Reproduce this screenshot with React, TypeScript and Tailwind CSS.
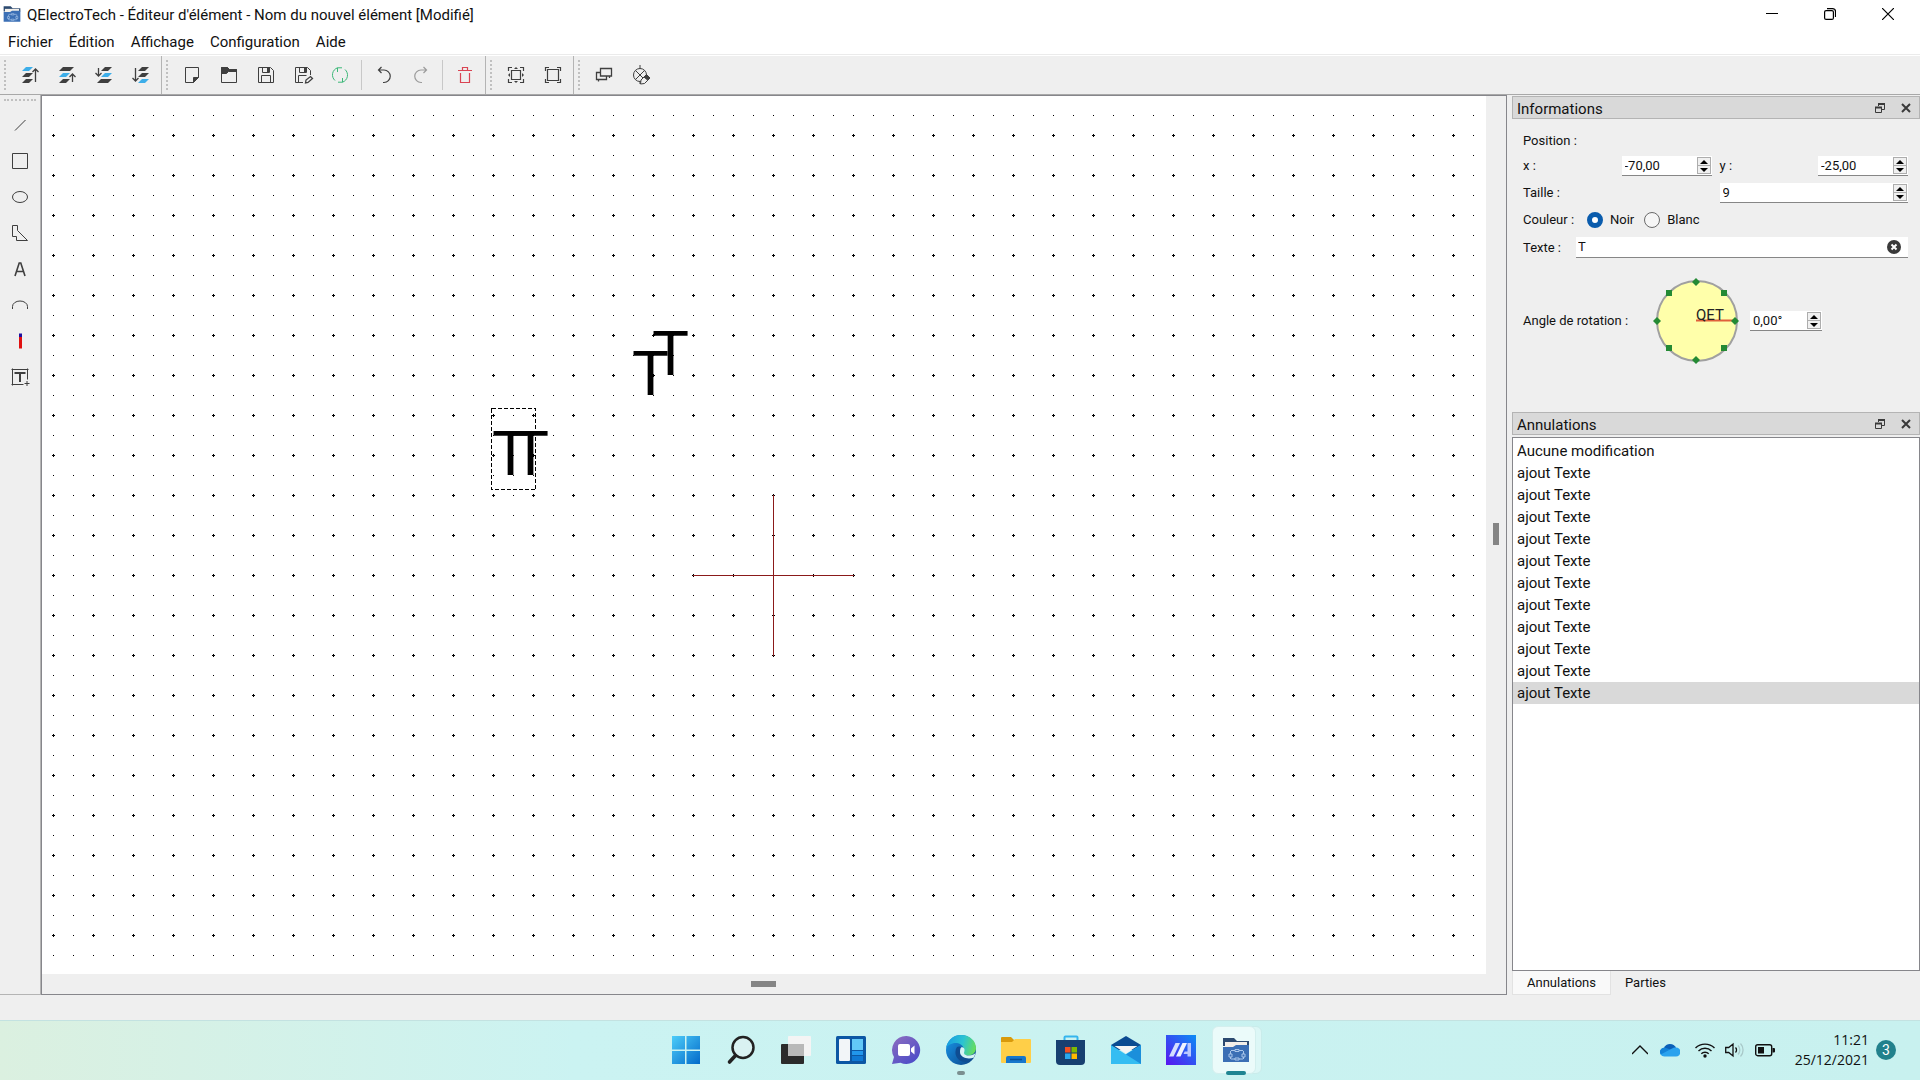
import { useState } from 'react';
import type { ReactNode } from 'react';

const UI_FONT = "font-[Roboto,'Open_Sans',sans-serif]";

const HISTORY = ['Aucune modification', ...Array.from({ length: 11 }, () => 'ajout Texte')];

const MENUS = ['Fichier', 'Édition', 'Affichage', 'Configuration', 'Aide'];

// Glyphs of the element editor, all on a 16x16 grid
function Glyph({ children, color = '#3f3f3f' }: { children: ReactNode; color?: string }) {
  return (
    <svg
      className="w-4 h-4 overflow-visible"
      viewBox="0 0 16 16"
      fill="none"
      stroke={color}
      strokeWidth="1"
      aria-hidden="true"
    >
      {children}
    </svg>
  );
}

// Three stacked sheets with an arrow; `blue` says which sheets are highlighted
function Layers({ blue, side, long }: { blue: boolean[]; side: 'left' | 'right'; long: boolean }) {
  const right = side === 'right';
  const dx = right ? 0 : 5;
  return (
    <Glyph>
      {blue.map((b, i) => (
        <path
          key={i}
          d={
            !long && (right ? i === 0 : i === 2)
              ? `M${right ? 0 : 1} ${i * 6 + 4}l4-4h11l-4 4z`
              : `M${dx} ${i * 6 + 4}l4-4h7l-4 4z`
          }
          fill={b ? '#3daee9' : '#3f3f3f'}
          stroke="none"
        />
      ))}
      {right ? (
        <path d={long ? 'M13.500 15V2M10.500 5l3-3 3 3' : 'M13.500 15V7M10.500 10l3-3 3 3'} strokeWidth="1.300" />
      ) : (
        <path d={long ? 'M2.500 1v13M-.5 11l3 3 3-3' : 'M2.500 1v8M-.5 6l3 3 3-3'} strokeWidth="1.300" />
      )}
    </Glyph>
  );
}

const DEPTH_TOOLS = [
  { name: 'Amener au premier plan', icon: <Layers blue={[true, false, false]} side="right" long /> },
  { name: 'Rapprocher', icon: <Layers blue={[false, true, false]} side="right" long={false} /> },
  { name: 'Éloigner', icon: <Layers blue={[false, true, false]} side="left" long={false} /> },
  { name: 'Envoyer au fond', icon: <Layers blue={[false, false, true]} side="left" long /> },
];

const FILE_TOOLS = [
  {
    name: 'Nouveau',
    icon: (
      <Glyph>
        <path d="M1.500.5h13v10l-5 5h-8z" />
        <path d="M14.500 10.500h-5v5z" fill="#3f3f3f" />
      </Glyph>
    ),
  },
  {
    name: 'Ouvrir',
    icon: (
      <Glyph>
        <path d="M.5.500h6l2 2h7v13H.5z" />
        <path d="M.5.500h6l2 2h7v2h-8l-2 2h-5z" fill="#3f3f3f" />
      </Glyph>
    ),
  },
  {
    name: 'Enregistrer',
    icon: (
      <Glyph>
        <path d="M.5.500h12l3 3v12H.5zM4.500.500v5h7v-5M3.500 15.500v-7h9v7" />
        <path d="M9 1h2v4H9z" fill="#3f3f3f" stroke="none" />
      </Glyph>
    ),
  },
  {
    name: 'Enregistrer sous',
    icon: (
      <Glyph>
        <path d="M8 15.500H.5V.500h12l3 3V8M4.500.500v5h7v-5M3.500 15.500v-7h8" />
        <path d="M9 1h2v4H9z" fill="#3f3f3f" stroke="none" />
        <path d="M10.500 16l.5-3 4.500-3.500 2 2L13 15.500z" strokeWidth="1.300" />
      </Glyph>
    ),
  },
  {
    name: 'Recharger',
    icon: (
      <Glyph color="#3cb878">
        <path d="M5.500.8A7.500 7.500 0 0 0 3 13.500M10.500 15.200A7.500 7.500 0 0 0 13 2.500" />
        <path d="M5.500 5V.800h4.500M10.500 11v4.200H6" />
      </Glyph>
    ),
  },
];

const UNDO_TOOLS = [
  {
    name: 'Annuler',
    icon: (
      <Glyph>
        <path d="M5.500 0L2.500 3l3 3M2.500 3H8a6 6 0 0 1 0 12.500H7" strokeWidth="1.200" />
      </Glyph>
    ),
  },
  {
    name: 'Refaire',
    icon: (
      <Glyph color="#9b9b9b">
        <path d="M10.500 0l3 3-3 3M13.500 3H8a6 6 0 0 0 0 12.500h1" strokeWidth="1.200" />
      </Glyph>
    ),
  },
];

const DELETE_TOOLS = [
  {
    name: 'Supprimer',
    icon: (
      <Glyph color="#da4453">
        <path d="M1 3.500h14M5.500 3V.500h5V3M3.500 6v9.500h9V6" strokeWidth="1.200" />
      </Glyph>
    ),
  },
];

const ZOOM_TOOLS = [
  {
    name: 'Zoom adapté',
    icon: (
      <Glyph>
        <path d="M3.500 3.500h9v9h-9zM.5 4V.500H4M12 .500h3.500V4M15.500 12v3.500H12M4 15.500H.5V12" strokeWidth="1.200" />
        <path d="M8 0l2 2H6zM8 16l2-2H6zM0 8l2-2v4zM16 8l-2-2v4z" fill="#3f3f3f" stroke="none" />
      </Glyph>
    ),
  },
  {
    name: 'Pas de zoom',
    icon: (
      <Glyph>
        <path d="M2.500 2.500h11v11h-11zM.5 4V.500H4M12 .500h3.500V4M15.500 12v3.500H12M4 15.500H.5V12" strokeWidth="1.200" />
      </Glyph>
    ),
  },
];

const PROPERTY_TOOLS = [
  {
    name: 'Éditer le nom',
    icon: (
      <Glyph>
        <path d="M4.500 1.500h11v7.500h-11zM4.500 5.500h-4v7h10V9M2.500 12.500v2M13.500 9v2" strokeWidth="1.300" />
      </Glyph>
    ),
  },
  {
    name: 'Éditer les propriétés',
    icon: (
      <Glyph>
        <circle cx="7" cy="8" r="6.500" />
        <path d="M2.500 3.500l9 9M11.500 3.500l-9 9M7-2v3.500M7 14.500V17" />
        <path d="M7.500 17l.5-4 5-5 3.500 3.500-5 5z" fill="#efefef" />
        <path d="M11 10l2.500-2.500L17 11l-2.500 2z" fill="#3f3f3f" />
      </Glyph>
    ),
  },
];

const DRAW_TOOLS = [
  { name: 'Ajouter une ligne', icon: <Glyph><path d="M3 13.500L13.500 3" /></Glyph> },
  { name: 'Ajouter un rectangle', icon: <Glyph><path d="M.5.500h15v15H.5z" /></Glyph> },
  { name: 'Ajouter une ellipse', icon: <Glyph><ellipse cx="8" cy="8" rx="7.500" ry="5.500" /></Glyph> },
  { name: 'Ajouter un polygone', icon: <Glyph><path d="M.5.500h5v5l10 10h-11v-4h-4z" /></Glyph> },
  {
    name: 'Ajouter du texte',
    icon: <Glyph><path d="M3 15L7.200 2h1.600L13 15M4.500 10.500h7" strokeWidth="1.600" /></Glyph>,
  },
  { name: 'Ajouter un arc', icon: <Glyph><path d="M.5 12V9.500a7.500 5.500 0 0 1 15 0V12" /></Glyph> },
  {
    name: 'Ajouter une borne',
    icon: (
      <Glyph>
        <path d="M7 4h3v11.500H7z" fill="#e01010" stroke="none" />
        <path d="M7 .5h3V4H7z" fill="#1f0fa0" stroke="none" />
      </Glyph>
    ),
  },
  {
    name: 'Ajouter un champ texte',
    icon: (
      <Glyph>
        <path d="M-.5.500h17M.5-.5v17M15.500-.5v11M-.5 15.500h12M15 12v5M12.500 14.500h5" />
        <path d="M3.500 5V4h9v1M8 4v9" strokeWidth="2" />
      </Glyph>
    ),
  },
];

function ToolButton({ name, icon }: { name: string; icon: ReactNode }) {
  return (
    <button type="button" aria-label={name} className="w-[37px] h-full flex items-center justify-center">
      {icon}
    </button>
  );
}

function ToolGroup({ children }: { children: ReactNode }) {
  return (
    <div className="flex h-full pr-0.5 border-r border-[#b4b4b4]">
      <div className="w-[11px] py-1 pl-1">
        <div className="w-[3px] h-full border-l-2 border-dotted border-[#c0c0c0]" />
      </div>
      {children}
    </div>
  );
}

function Separator() {
  return (
    <div className="w-[7px] py-1 flex justify-center">
      <div className="w-px h-full bg-[#c8c8c8]" />
    </div>
  );
}

function QetLogo({ className }: { className: string }) {
  return (
    <svg className={className} viewBox="0 0 28 26" aria-hidden="true">
      <path d="M1 1h11l3 3h12v5H1z" fill="#2c4a70" />
      <path d="M3 5h22v6H3z" fill="#f3efe9" />
      <path d="M1 25V10h10l3-2h13v17z" fill="#3b6fb5" />
      <g fill="none" stroke="#a9c6ea" strokeWidth="1">
        <path d="M9 13.500h4M17 13.500h4M9 22h4M17 22h4M8.500 14v3M8.500 20v2M21.500 14v3M21.500 20v2" />
        <path d="M13 12.500h4v2h-4zM13 21h4v2h-4zM7 17h3v3H7zM20 17h3v3h-3z" />
      </g>
    </svg>
  );
}

function Canvas() {
  return (
    <section className="flex-1 min-w-0 flex flex-col border border-[#86868b]">
      <div className="flex-1 min-h-0 flex">
        <div className="flex-1 min-w-0 relative bg-white">
          <svg className="absolute inset-0 w-full h-full" role="img" aria-label="Zone de dessin">
            <defs>
              <pattern id="grid" x="1" y="29" width="40" height="40" patternUnits="userSpaceOnUse">
                <path d="M9 10h3v1H9zM10 9h1v3h-1zM30 10h1v1h-1zM10 30h1v1h-1zM30 30h1v1h-1z" fill="#000" />
              </pattern>
            </defs>
            <rect y="4" width="100%" height="100%" fill="url(#grid)" />
            <g stroke="#8b1a1a" strokeWidth="1" shapeRendering="crispEdges">
              <path d="M651 479.500h161M731.500 399v161" />
            </g>
            <g className="font-[Roboto,sans-serif] text-[62px]" fill="#000">
              <text x="610" y="279">T</text>
              <text x="590" y="299">T</text>
              <text x="450" y="379">T</text>
              <text x="470" y="379">T</text>
            </g>
            <rect
              x="449.500"
              y="312.500"
              width="44"
              height="81"
              fill="none"
              stroke="#000"
              strokeDasharray="4 2"
              shapeRendering="crispEdges"
            />
          </svg>
        </div>
        <div className="w-5 flex items-center justify-center bg-[#efefef] pb-0.5">
          <div className="w-1.5 h-[22px] bg-[#858585]" />
        </div>
      </div>
      <div className="h-5 flex items-center justify-center pr-[22px] bg-[#efefef]">
        <div className="w-[25px] h-1.5 bg-[#858585]" />
      </div>
    </section>
  );
}

function DockHeader({ title }: { title: string }) {
  return (
    <div className="h-[23px] flex items-center pl-1 pr-2 border border-[#b4b4b4] bg-[#d9d9d9]">
      <h2 className="flex-1 pt-0.5 text-[15px] leading-5">{title}</h2>
      <button type="button" aria-label={`Détacher ${title}`} className="mr-4">
        <svg className="w-2.5 h-2.5" viewBox="0 0 10 10" fill="none" stroke="#3a3a3a" aria-hidden="true">
          <path d="M3.500 3V1.500h6v5H7" />
          <path d="M3 1h7M0 4.500h7" strokeWidth="2" />
          <path d="M.5 4.500h6v5h-6z" />
        </svg>
      </button>
      <button type="button" aria-label={`Fermer ${title}`}>
        <svg className="w-2.5 h-2.5" viewBox="0 0 10 10" stroke="#3a3a3a" strokeWidth="2" aria-hidden="true">
          <path d="M1 1l8 8M9 1L1 9" />
        </svg>
      </button>
    </div>
  );
}

function SpinBox({ id, value, className }: { id: string; value: string; className: string }) {
  const [text, setText] = useState(value);
  return (
    <div className={`flex h-5 p-px bg-white border-b border-[#868686] ${className}`}>
      <input
        id={id}
        value={text}
        onChange={(e) => setText(e.target.value)}
        className="flex-1 min-w-0 px-0.5 bg-transparent outline-none"
      />
      <div className="w-3.5 flex flex-col border border-[#adadad] bg-[#f0f0f0]">
        <button type="button" aria-label="Augmenter" className="flex-1 flex items-center justify-center">
          <svg className="w-2 h-1" viewBox="0 0 8 4" aria-hidden="true"><path d="M4 0l4 4H0z" /></svg>
        </button>
        <button
          type="button"
          aria-label="Diminuer"
          className="flex-1 flex items-center justify-center border-t border-[#adadad]"
        >
          <svg className="w-2 h-1" viewBox="0 0 8 4" aria-hidden="true"><path d="M4 4l4-4H0z" /></svg>
        </button>
      </div>
    </div>
  );
}

function Radio({ label, checked, onPick }: { label: string; checked: boolean; onPick: () => void }) {
  return (
    <label className="flex items-center gap-[7px]">
      <input
        type="radio"
        name="couleur"
        checked={checked}
        onChange={onPick}
        className="appearance-none w-4 h-4 rounded-full border border-[#6a6a6a] bg-[#f6f6f6] checked:border-[5px] checked:border-[#0a5cad] checked:bg-white"
      />
      {label}
    </label>
  );
}

// Points every 45 degrees: diamonds on the axes, squares between them
function AngleDial() {
  return (
    <svg className="w-[84px] h-[84px] overflow-visible" viewBox="0 0 84 84" role="img" aria-label="Angle">
      <circle cx="42" cy="42" r="40" fill="#ffffaa" stroke="#a0a0a0" strokeWidth="2" />
      <path d="M41 41.500h38" stroke="#e0603a" strokeWidth="2" />
      <g fill="#248a34">
        <path d="M41-1l4 4-4 4-4-4zM41 77l4 4-4 4-4-4zM2 38l4 4-4 4-4-4zM80 38l4 4-4 4-4-4z" />
        <path d="M11 11h6v6h-6zM66 11h6v6h-6zM11 66h6v6h-6zM66 66h6v6h-6z" />
      </g>
      <text x="41" y="41" className="font-[Roboto,sans-serif] text-[15px]" fill="#222">
        QET
      </text>
    </svg>
  );
}

function InfoPanel() {
  const [color, setColor] = useState('noir');
  const [text, setText] = useState('T');
  return (
    <section>
      <DockHeader title="Informations" />
      <form className="text-[13px] leading-4 pl-[11px] pr-3 pt-3.5 pb-12">
        <p>Position :</p>
        <div className="grid grid-cols-2 gap-2 mt-[7px]">
          <div className="flex items-center justify-between">
            <label htmlFor="pos-x">x :</label>
            <SpinBox id="pos-x" value="-70,00" className="w-[90px]" />
          </div>
          <div className="flex items-center justify-between">
            <label htmlFor="pos-y">y :</label>
            <SpinBox id="pos-y" value="-25,00" className="w-[90px]" />
          </div>
        </div>
        <div className="grid grid-cols-2 gap-2 items-center mt-[7px]">
          <label htmlFor="taille">Taille :</label>
          <SpinBox id="taille" value="9" className="w-full" />
        </div>
        <div className="flex items-center mt-[9px]">
          <span className="w-16">Couleur :</span>
          <Radio label="Noir" checked={color === 'noir'} onPick={() => setColor('noir')} />
          <span className="w-2.5" />
          <Radio label="Blanc" checked={color === 'blanc'} onPick={() => setColor('blanc')} />
        </div>
        <div className="flex items-center mt-[9px]">
          <label htmlFor="texte" className="w-[53px]">Texte :</label>
          <div className="flex-1 h-[21px] flex items-center pl-0.5 pr-[7px] bg-white border-b border-[#868686]">
            <input
              id="texte"
              value={text}
              onChange={(e) => setText(e.target.value)}
              className="flex-1 min-w-0 outline-none"
            />
            <button type="button" aria-label="Effacer" onClick={() => setText('')}>
              <svg className="w-3.5 h-3.5" viewBox="0 0 14 14" aria-hidden="true">
                <circle cx="7" cy="7" r="7" fill="#3a3a3a" />
                <path d="M4.500 4.500l5 5M9.500 4.500l-5 5" stroke="#fff" strokeWidth="2" />
              </svg>
            </button>
          </div>
        </div>
        <div className="flex items-center mt-[21px]">
          <label htmlFor="angle" className="w-[132px]">Angle de rotation :</label>
          <AngleDial />
          <SpinBox id="angle" value="0,00°" className="w-[72px] ml-[11px]" />
        </div>
      </form>
    </section>
  );
}

function UndoPanel() {
  const [current, setCurrent] = useState(HISTORY.length - 1);
  return (
    <section className="flex-1 min-h-0 flex flex-col pt-px">
      <DockHeader title="Annulations" />
      <ul className="flex-1 min-h-0 overflow-hidden mt-0.5 pt-0.5 bg-white border border-[#86868b] text-[15px] leading-[22px]">
        {HISTORY.map((entry, i) => (
          <li key={i}>
            <button
              type="button"
              onClick={() => setCurrent(i)}
              className={`w-full pl-1 text-left ${i === current ? 'bg-[#d9d9d9]' : ''}`}
            >
              {entry}
            </button>
          </li>
        ))}
      </ul>
      <div className="flex h-6 text-[13px] leading-5">
        <button type="button" className="px-3.5 bg-[#f9f9f9] border-x border-b border-[#e2e2e2]">
          Annulations
        </button>
        <button type="button" className="px-3.5 pb-px">Parties</button>
      </div>
    </section>
  );
}

const TASKS = [
  {
    name: 'Démarrer',
    icon: (
      <svg className="w-[30px] h-[30px]" viewBox="0 0 30 30" aria-hidden="true">
        <defs>
          <linearGradient id="win" x1="0" y1="0" x2="30" y2="30" gradientUnits="userSpaceOnUse">
            <stop stopColor="#4fd0fb" />
            <stop offset="1" stopColor="#0067c8" />
          </linearGradient>
        </defs>
        <path d="M1 1h13v13.500H1zM15.500 1H29v13.500H15.500zM1 16h13v13H1zM15.500 16H29v13H15.500z" fill="url(#win)" />
      </svg>
    ),
  },
  {
    name: 'Rechercher',
    icon: (
      <svg className="w-[30px] h-[30px]" viewBox="0 0 30 30" fill="none" stroke="#222" aria-hidden="true">
        <circle cx="17" cy="12.500" r="10.500" strokeWidth="2.500" fill="#d9f2f2" />
        <path d="M9.500 20.500l-6 6.500" strokeWidth="3.600" strokeLinecap="round" />
      </svg>
    ),
  },
  {
    name: 'Affichage des tâches',
    icon: (
      <svg className="w-[30px] h-[30px]" viewBox="0 0 30 30" aria-hidden="true">
        <rect y="9" width="23" height="20" rx="1" fill="#2b2b2b" />
        <rect x="7" y="1" width="23" height="20" rx="1" fill="#f4f4f4" />
        <path d="M7 9h16v12H8a1 1 0 0 1-1-1z" fill="#b9b9b9" />
      </svg>
    ),
  },
  {
    name: 'Widgets',
    icon: (
      <svg className="w-[30px] h-[30px]" viewBox="0 0 30 30" aria-hidden="true">
        <rect y="1" width="30" height="28" rx="1.500" fill="#0c57a4" />
        <rect x="3" y="4" width="11" height="22" rx="1" fill="#f2f5f8" />
        <path d="M16 4h11v11H16z" fill="#62c9f8" />
        <path d="M16 16h11v4H16z" fill="#2196ec" />
        <path d="M16 21h11v5H16z" fill="#0f78d4" />
      </svg>
    ),
  },
  {
    name: 'Conversation',
    icon: (
      <svg className="w-[30px] h-[30px]" viewBox="0 0 30 30" aria-hidden="true">
        <defs>
          <linearGradient id="chat" x1="4" y1="2" x2="24" y2="28" gradientUnits="userSpaceOnUse">
            <stop stopColor="#8a6cc0" />
            <stop offset="1" stopColor="#4b4cc8" />
          </linearGradient>
        </defs>
        <path d="M15.500 1a14 14 0 1 1-6 26.800L1 29l2-7A14 14 0 0 1 15.500 1z" fill="url(#chat)" />
        <rect x="7" y="9" width="12" height="12" rx="2" fill="#fff" />
        <path d="M20 13.500l3.500-3v9l-3.500-3z" fill="#fff" />
      </svg>
    ),
  },
  {
    name: 'Edge',
    running: true,
    icon: (
      <svg className="w-[30px] h-[30px]" viewBox="0 0 30 30" aria-hidden="true">
        <defs>
          <linearGradient id="edgeTop" x1="2" y1="6" x2="30" y2="14" gradientUnits="userSpaceOnUse">
            <stop stopColor="#1aa0e0" />
            <stop offset=".5" stopColor="#2bc3d2" />
            <stop offset="1" stopColor="#6be055" />
          </linearGradient>
          <linearGradient id="edgeLow" x1="2" y1="10" x2="24" y2="28" gradientUnits="userSpaceOnUse">
            <stop stopColor="#1688d8" />
            <stop offset="1" stopColor="#0c4a90" />
          </linearGradient>
        </defs>
        <circle cx="15" cy="15" r="15" fill="url(#edgeLow)" />
        <path d="M0 13C2 4 8 0 15 0c9 0 15 6 15 13 0 5-4 7.500-8 7.500-3.500 0-5-1.500-4.500-3C19 14 17 9 11 8 6 7.500 2 10 0 13z" fill="url(#edgeTop)" />
        <path d="M11 12c-4 6 0 15 8 15 4 0 7-2 9-4.500-6 2-13 0-13-5.500 0-2 1-3 1-4-1-1.500-3.500-2-5-1z" fill="#0f4d92" />
        <path d="M15 12.500c2-1 4 1 3.500 3.500-.8 2-1 4.500 4.500 4.500 3 0 5-1 6.500-2.500L28 22.500c-6 2.500-14 0-14-5.500 0-2 .3-3.500 1-4.500z" fill="#d6f3f5" />
      </svg>
    ),
  },
  {
    name: 'Explorateur',
    icon: (
      <svg className="w-[30px] h-[30px]" viewBox="0 0 30 30" aria-hidden="true">
        <path d="M0 3a1 1 0 0 1 1-1h9l3 3v6H0z" fill="#d99a0b" />
        <path d="M0 7h11l3-3h15a1 1 0 0 1 1 1v22a1 1 0 0 1-1 1H1a1 1 0 0 1-1-1z" fill="#ffcf48" />
        <path d="M5 28v-5a2 2 0 0 1 2-2h16a2 2 0 0 1 2 2v5z" fill="#1777cc" />
        <path d="M9 24.500h12" stroke="#0b4f94" strokeWidth="1.500" />
      </svg>
    ),
  },
  {
    name: 'Microsoft Store',
    icon: (
      <svg className="w-[30px] h-[30px]" viewBox="0 0 30 30" aria-hidden="true">
        <path d="M8.500 7V2.500a1 1 0 0 1 1-1h11a1 1 0 0 1 1 1V7" fill="none" stroke="#35b5ee" strokeWidth="2" />
        <path d="M0 5h29v21a4 4 0 0 1-4 4H4a4 4 0 0 1-4-4z" fill="#173f70" />
        <path d="M9 12h5.500v5.500H9z" fill="#f25022" />
        <path d="M15.500 12H21v5.500h-5.500z" fill="#7fba00" />
        <path d="M9 18.500h5.500V24H9z" fill="#29a8ee" />
        <path d="M15.500 18.500H21V24h-5.500z" fill="#ffb900" />
      </svg>
    ),
  },
  {
    name: 'Courrier',
    icon: (
      <svg className="w-[30px] h-[30px]" viewBox="0 0 30 30" aria-hidden="true">
        <path d="M0 10L15 1l15 9v5H0z" fill="#0a4a91" />
        <path d="M0 29V10l30 19z" fill="#35bdf2" />
        <path d="M0 29l15-10L30 10v19z" fill="#35bdf2" />
        <path d="M15 19.500L30 10v19z" fill="#1b8fdb" />
        <path d="M3.500 11h23L15 18.500z" fill="#f4f4f4" />
      </svg>
    ),
  },
  {
    name: 'MyASUS',
    icon: (
      <svg className="w-[30px] h-[30px]" viewBox="0 0 30 30" aria-hidden="true">
        <defs>
          <linearGradient id="asus" x1="0" y1="30" x2="30" y2="0" gradientUnits="userSpaceOnUse">
            <stop stopColor="#5a14f0" />
            <stop offset="1" stopColor="#0b8df5" />
          </linearGradient>
        </defs>
        <path d="M0 0h30v30H0z" fill="url(#asus)" />
        <path d="M3 21.500L9.500 8H14L7.500 21.500z" fill="#d5deff" />
        <path d="M10 21.500L16.500 8H21l-6.500 13.500z" fill="#f0f3ff" />
        <path d="M21.500 8H25v13.500h-3.500V19h-4l1.200-2.500h2.800z" fill="#b9c8ff" />
      </svg>
    ),
  },
  {
    name: 'QElectroTech',
    active: true,
    icon: <QetLogo className="w-7 h-[26px]" />,
  },
];

function Taskbar() {
  return (
    <footer className="h-[60px] grid grid-cols-[1fr_auto_1fr] border-t border-[#c3e2e1] bg-linear-to-r from-[#dbf0e0] via-[#cbf3f2] via-30% to-[#c8f1ef]">
      <div />
      <nav className="flex pl-px">
        {TASKS.map((task) => (
          <button
            key={task.name}
            type="button"
            aria-label={task.name}
            className="relative w-[55px] h-[58px] flex items-center justify-center"
          >
            {task.active && (
              <>
                <span className="absolute left-2 top-[5px] w-[46px] h-12 rounded-md bg-[#dcf7f6] border border-[#c9eceb]" />
                <span className="absolute left-1 top-[5px] w-11 h-12 rounded-md bg-[#ebfbfa] border border-[#d3efee]" />
                <span className="absolute left-[18px] bottom-1 w-5 h-1 rounded-full bg-[#1f8592]" />
              </>
            )}
            {task.running && (
              <span className="absolute left-6 bottom-1 w-2 h-1 rounded-full bg-[#7b8f90]" />
            )}
            <span className="relative">{task.icon}</span>
          </button>
        ))}
      </nav>
      <div className="h-[58px] flex items-center justify-end pr-6">
        <button type="button" aria-label="Icônes cachées" className="mr-3">
          <svg className="w-4 h-4" viewBox="0 0 16 16" fill="none" stroke="#111" strokeWidth="1.300" aria-hidden="true">
            <path d="M0 12l8-8 8 8" />
          </svg>
        </button>
        <button type="button" aria-label="OneDrive" className="mr-[15px]">
          <svg className="w-5 h-4" viewBox="0 0 20 16" aria-hidden="true">
            <path d="M4 6a6.500 6.500 0 0 1 12 0l-2 6H4z" fill="#0a5fb8" />
            <path d="M4.500 5.500A4.500 4.500 0 0 0 1 13l11-5z" fill="#1382d8" />
            <path d="M16 5.500a4.300 4.300 0 0 1 0 9H4.500c-2 0-3-.8-3.800-2L12 6.500c1-.7 2.500-1.200 4-1z" fill="#2aa2ee" />
          </svg>
        </button>
        <button type="button" aria-label="Réseau, son et batterie" className="flex items-center gap-2.5 mr-5">
          <svg className="w-5 h-4" viewBox="0 0 20 16" fill="none" stroke="#111" strokeWidth="1.400" aria-hidden="true">
            <path d="M.5 6a13.500 13.500 0 0 1 19 0M3.500 9a9.200 9.200 0 0 1 13 0M6.300 11.800a5.200 5.200 0 0 1 7.400 0" />
            <circle cx="10" cy="14" r="1.700" fill="#111" stroke="none" />
          </svg>
          <svg className="w-5 h-4" viewBox="0 0 20 16" fill="none" stroke="#111" strokeWidth="1.300" aria-hidden="true">
            <path d="M.7 5.500h3L8 2v12l-4.300-3.500h-3zM10.500 5.500a3.500 3.500 0 0 1 0 5" />
            <path d="M13 3.500a6.500 6.500 0 0 1 0 9M15.500 1.500a9.500 9.500 0 0 1 0 13" stroke="#a9c9c9" />
          </svg>
          <svg className="w-5 h-4" viewBox="0 0 20 16" fill="none" stroke="#111" strokeWidth="1.400" aria-hidden="true">
            <rect x=".7" y="2.700" width="16" height="11" rx="2" />
            <path d="M3 5h6v6.500H3zM17.500 6h1.500a1 1 0 0 1 1 1v2.500a1 1 0 0 1-1 1h-1.500z" fill="#111" stroke="none" />
          </svg>
        </button>
        <time
          className="text-right font-['Open_Sans','Noto_Sans',sans-serif] text-[14px] leading-5 mr-[7px]"
          dateTime="2021-12-25T11:21"
        >
          11:21
          <br />
          25/12/2021
        </time>
        <button type="button" className="w-5 h-5 rounded-full bg-[#22818c] text-white text-[14px] leading-5">
          3
        </button>
      </div>
    </footer>
  );
}

export default function App() {
  return (
    <div className={`${UI_FONT} h-screen flex flex-col bg-[#efefef] text-[#111] overflow-hidden`}>
      {/* Title bar */}
      <header className="h-7 flex items-center pl-[3px] bg-white text-[15px] leading-5">
        <QetLogo className="w-[18px] h-[18px] mr-1.5" />
        <h1 className="flex-1 pt-0.5">QElectroTech - Éditeur d'élément - Nom du nouvel élément [Modifié]</h1>
        <button type="button" aria-label="Réduire" className="w-[58px] flex justify-center">
          <svg className="w-3 h-3" viewBox="0 0 12 12" stroke="#000" aria-hidden="true"><path d="M0 5.500h12" /></svg>
        </button>
        <button type="button" aria-label="Restaurer" className="w-[58px] flex justify-center">
          <svg className="w-3 h-3" viewBox="0 0 12 12" fill="none" stroke="#000" strokeWidth="1.200" aria-hidden="true">
            <rect x=".6" y="2.600" width="8.800" height="8.800" rx="1.500" />
            <path d="M3 .6h5.500a3 3 0 0 1 3 3V9" />
          </svg>
        </button>
        <button type="button" aria-label="Fermer" className="w-[58px] mr-[3px] flex justify-center">
          <svg className="w-3 h-3" viewBox="0 0 12 12" stroke="#000" strokeWidth="1.200" aria-hidden="true">
            <path d="M0 0l12 12M12 0L0 12" />
          </svg>
        </button>
      </header>

      <nav className="h-[27px] flex items-center gap-4 px-2 pt-0.5 bg-white border-b border-[#ebebeb] text-[15px] leading-5">
        {MENUS.map((menu) => (
          <button key={menu} type="button">{menu}</button>
        ))}
      </nav>

      {/* Toolbars */}
      <div className="h-10 flex border-t border-t-white border-b border-b-[#a8a8a8]">
        <ToolGroup>
          {DEPTH_TOOLS.map((t) => <ToolButton key={t.name} {...t} />)}
        </ToolGroup>
        <ToolGroup>
          {FILE_TOOLS.map((t) => <ToolButton key={t.name} {...t} />)}
          <Separator />
          {UNDO_TOOLS.map((t) => <ToolButton key={t.name} {...t} />)}
          <Separator />
          {DELETE_TOOLS.map((t) => <ToolButton key={t.name} {...t} />)}
        </ToolGroup>
        <ToolGroup>
          {ZOOM_TOOLS.map((t) => <ToolButton key={t.name} {...t} />)}
        </ToolGroup>
        <div className="flex">
          <div className="w-[11px] py-1 pl-1">
            <div className="h-full border-l-2 border-dotted border-[#c0c0c0]" />
          </div>
          {PROPERTY_TOOLS.map((t) => <ToolButton key={t.name} {...t} />)}
        </div>
      </div>

      <main className="flex-1 min-h-0 flex">
        <aside className="w-[41px] px-1 pt-1 border-r border-b border-[#b4b4b4]">
          <div className="h-2 border-t-2 border-dotted border-[#c0c0c0]" />
          {DRAW_TOOLS.map((t) => (
            <button
              key={t.name}
              type="button"
              aria-label={t.name}
              className="w-full h-9 flex items-center justify-center"
            >
              {t.icon}
            </button>
          ))}
        </aside>
        <Canvas />
        <aside className="w-[413px] pl-[5px] pt-px flex flex-col">
          <InfoPanel />
          <UndoPanel />
        </aside>
      </main>

      {/* Status bar */}
      <div className="h-[25px]" />
      <Taskbar />
    </div>
  );
}
